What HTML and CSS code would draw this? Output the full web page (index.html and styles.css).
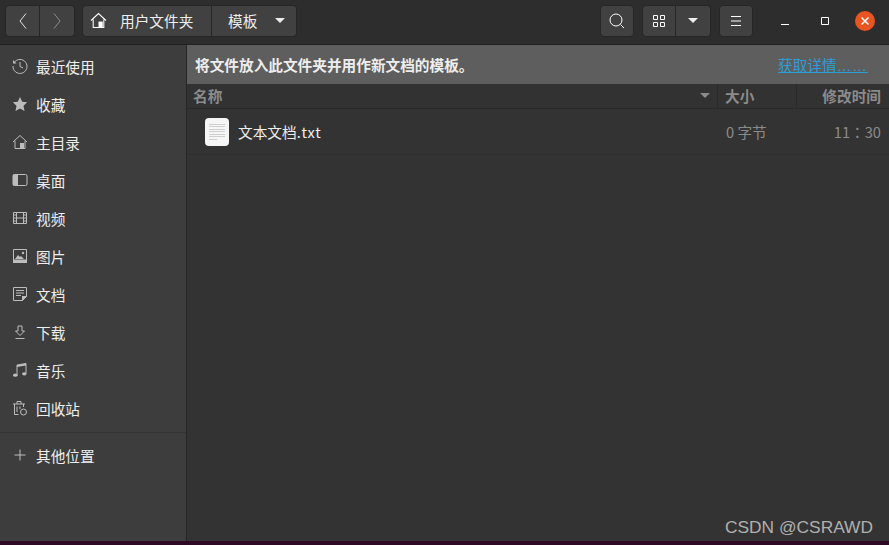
FILE: index.html
```html
<!DOCTYPE html>
<html lang="zh-CN">
<head>
<meta charset="utf-8">
<title>模板</title>
<link rel="stylesheet" href="styles.css">
</head>
<body>
<div class="window">
  <header class="titlebar">
    <div class="btn-group nav-group">
      <button class="btn nav-btn"><svg width="10" height="18" viewBox="0 0 10 18"><path d="M8 1.500 2 9l6 7.500" class="st"/></svg></button>
      <button class="btn nav-btn dim"><svg width="10" height="18" viewBox="0 0 10 18"><path d="M2 1.500 8 9l-6 7.500" class="st"/></svg></button>
    </div>
    <div class="btn-group path-group">
      <button class="btn path-home">
        <svg width="17" height="17" viewBox="0 0 16 16"><path d="M1 8 8 1.500 15 8M3 7v7.500h10V7" class="st"/><rect x="8" y="9" width="4" height="5.500" fill="#fff"/></svg>
        <span>用户文件夹</span>
      </button>
      <button class="btn path-current">
        <span>模板</span>
        <i class="caret"></i>
      </button>
    </div>
    <div class="spacer"></div>
    <button class="btn single"><svg width="18" height="18" viewBox="0 0 18 18"><circle cx="8" cy="8" r="6" class="st"/><path d="m12.500 12.500 3.500 3.500" class="st"/></svg></button>
    <div class="btn-group view-group">
      <button class="btn view-main"><svg width="14" height="14" viewBox="0 0 14 14"><path d="M1.500 1.500h4v4h-4zM8.500 1.500h4v4h-4zM1.500 8.500h4v4h-4zM8.500 8.500h4v4h-4z" class="st"/></svg></button>
      <button class="btn view-drop"><i class="caret"></i></button>
    </div>
    <button class="btn single"><svg width="14" height="14" viewBox="0 0 14 14"><path d="M2 2.500h10M2 7h10M2 11.500h10" class="st"/></svg></button>
    <div class="winctl">
      <span class="ctl"><svg width="10" height="10" viewBox="0 0 10 10"><path d="M1 8.500h8" class="st"/></svg></span>
      <span class="ctl"><svg width="10" height="10" viewBox="0 0 10 10"><path d="M1.500 1.500h7v7h-7z" class="st"/></svg></span>
      <span class="ctl close"><svg width="10" height="10" viewBox="0 0 10 10"><path d="m1.500 1.500 7 7m0-7-7 7" class="st thick"/></svg></span>
    </div>
  </header>
  <div class="main">
    <nav class="sidebar">
      <a class="item"><svg class="ico" viewBox="0 0 16 16"><path d="M2.200 4.500A7 7 0 1 1 1 8" class="si"/><path d="M1 2v3.500h3.500" fill="#bdbdbd"/><path d="M8 4v4.500l3 1.500" class="si"/></svg><span>最近使用</span></a>
      <a class="item"><svg class="ico" viewBox="0 0 16 16"><path d="m8 1 2.200 4.700 5 .6-3.700 3.500 1 5.100L8 12.400l-4.500 2.500 1-5.100L.8 6.300l5-.6z" fill="#bdbdbd"/></svg><span>收藏</span></a>
      <a class="item"><svg class="ico" viewBox="0 0 16 16"><path d="M1 8 8 1.500 15 8M3 7v7.500h10V7" class="si"/><rect x="8" y="9" width="4" height="5.500" fill="#bdbdbd"/></svg><span>主目录</span></a>
      <a class="item"><svg class="ico" viewBox="0 0 16 16"><rect x="1" y="2.500" width="14" height="11" rx="1.500" class="si"/><rect x="1" y="2.500" width="5" height="11" fill="#bdbdbd"/></svg><span>桌面</span></a>
      <a class="item"><svg class="ico" viewBox="0 0 16 16"><path d="M1.500 2.500h13v11h-13zM4.500 2.500v11M11.500 2.500v11M4.500 8h7M1.500 5h3M1.500 8h3M1.500 11h3M11.500 5h3M11.500 8h3M11.500 11h3" class="si"/></svg><span>视频</span></a>
      <a class="item"><svg class="ico" viewBox="0 0 16 16"><path d="M1.500 1.500h13v12.500h-13z" class="si"/><path d="M1 11.500h14V15H1zM3 11l3-4 2 2 1-1 3 3z" fill="#bdbdbd"/><circle cx="11" cy="5" r="1.200" fill="#bdbdbd"/></svg><span>图片</span></a>
      <a class="item"><svg class="ico" viewBox="0 0 16 16"><path d="M10.500 14.500h-9v-13h13v9zM4 4.500h8M4 7h8M4 9.500h5" class="si"/><path d="M10 15v-5h5z" fill="#bdbdbd"/></svg><span>文档</span></a>
      <a class="item"><svg class="ico" viewBox="0 0 16 16"><path d="M6 2h4v5h2.500L8 11.500 3.500 7H6zM3.500 14.500h9" class="si"/></svg><span>下载</span></a>
      <a class="item"><svg class="ico" viewBox="0 0 16 16"><path d="M5 13V3l9-1.500V11" class="si" stroke-width="1.400"/><ellipse cx="3.300" cy="13.200" rx="2.300" ry="1.600" fill="#bdbdbd"/><ellipse cx="12.300" cy="11.800" rx="2.300" ry="1.600" fill="#bdbdbd"/><path d="M5 3l9-1.500v2L5 5z" fill="#bdbdbd"/></svg><span>音乐</span></a>
      <a class="item"><svg class="ico" viewBox="0 0 16 16"><path d="M1 4h12M5 4V1.500h4V4M2.500 4v10.500h4M11.500 4v3M5 6.500V12M8 6.500V9" class="si"/><circle cx="11.500" cy="12" r="3" class="si"/></svg><span>回收站</span></a>
      <div class="sep"></div>
      <a class="item other"><svg class="ico" viewBox="0 0 16 16"><path d="M8 2.500v11M2.500 8h11" class="si"/></svg><span>其他位置</span></a>
    </nav>
    <section class="content">
      <div class="infobar">
        <strong>将文件放入此文件夹并用作新文档的模板。</strong>
        <a class="link">获取详情<span class="dots">……</span></a>
      </div>
      <div class="cols">
        <div class="col c-name"><span>名称</span><i class="caret sort"></i></div>
        <div class="col c-size">大小</div>
        <div class="col c-time">修改时间</div>
      </div>
      <div class="file">
        <div class="f-name">
          <div class="doc"><i></i><i></i><i></i><i></i><i></i><i></i><i class="short"></i></div>
          <span>文本文档<span class="ext">.txt</span></span>
        </div>
        <div class="f-size">0 字节</div>
        <div class="f-time">11：30</div>
      </div>
      <div class="mark">CSDN @CSRAWD</div>
    </section>
  </div>
</div>
<div class="strip"></div>
</body>
</html>
```
FILE: styles.css
```css
* { box-sizing: border-box; }
html, body { margin: 0; height: 545px; overflow: hidden; background: #300a24; }
body { font-family: "Noto Sans CJK SC", "Noto Sans", sans-serif; font-size: 14.67px; color: #eee; }
.window { height: 541px; display: flex; flex-direction: column; }
.strip { height: 4px; background: #300a24; }
.st { fill: none; stroke: #fff; stroke-width: 1; }
.st.thick { stroke-width: 1.5; }
.si { fill: none; stroke: #bdbdbd; stroke-width: 1; }

.titlebar { height: 45px; flex: none; display: flex; align-items: flex-start; gap: 8px; padding: 5px 0 0 5px; background: #2d2d2d; border-bottom: 1px solid #202020; }
.btn { font: inherit; color: #eee; height: 32px; display: flex; align-items: center; justify-content: center; padding: 0 0 1px; background: #414141; border: 1px solid #262626; border-radius: 4px; }
.btn-group { display: flex; }
.btn-group .btn { border-radius: 0; }
.btn-group .btn:first-child { border-radius: 4px 0 0 4px; }
.btn-group .btn:last-child { border-radius: 0 4px 4px 0; border-left: 0; }
.nav-btn { width: 35px; }
.nav-btn svg { opacity: .85; }
.nav-btn.dim svg { opacity: .4; }
.path-group { margin-left: -1px; }
.path-home { width: 130px; gap: 13px; justify-content: flex-start; padding-left: 7px; }
.path-current { width: 85px; justify-content: flex-start; padding-left: 16px; gap: 18px; }
.caret { display: block; width: 0; height: 0; border: 5px solid transparent; border-top: 5px solid #eee; border-bottom: 0; }
.spacer { flex: 1; }
.single { width: 34px; }
.view-main { width: 34px; }
.view-drop { width: 35px; }
.winctl { display: flex; align-items: center; height: 32px; gap: 20px; margin: 0 14px 0 14px; }
.ctl { width: 20px; height: 20px; display: flex; align-items: center; justify-content: center; }
.close { background: #e95420; border-radius: 50%; }

.main { flex: 1; display: flex; min-height: 0; }
.sidebar { width: 187px; flex: none; background: #3d3d3d; border-right: 1px solid #262626; padding-top: 2px; }
.item { height: 38px; display: flex; align-items: center; gap: 8px; padding-left: 12px; color: #eee; }
.ico { width: 16px; height: 16px; flex: none; }
.sep { height: 1px; background: #333; margin-top: 5px; }
.other { margin-top: 2px; height: 40px; padding-bottom: 0; }

.content { flex: 1; position: relative; background: #333; min-width: 0; }
.infobar { height: 39px; display: flex; align-items: center; justify-content: space-between; padding: 0 21px 0 8px; background: #5e5e5e; color: #eee; }
.infobar strong { font-weight: 700; }
.link { color: #2a9fd6; text-decoration: underline; }
.dots { font-family: "Liberation Sans", sans-serif; letter-spacing: 1px; }
.cols { height: 25px; display: flex; align-items: center; color: #8b8b8b; font-weight: 700; border-bottom: 1px solid #2a2a2a; background: #323232; }
.col { height: 100%; display: flex; align-items: center; padding-bottom: 2px; }
.c-name { width: 530px; justify-content: space-between; padding: 0 7px 2px 6px; }
.caret.sort { border-top-color: #8b8b8b; }
.c-size { width: 79px; padding-left: 7px; border-left: 1px solid #2a2a2a; }
.c-time { flex: 1; justify-content: flex-end; padding-right: 8px; border-left: 1px solid #2a2a2a; }
.file { height: 46px; display: flex; align-items: center; border-bottom: 1px solid #2e2e2e; }
.f-name { width: 530px; display: flex; align-items: center; gap: 9px; padding-left: 18px; color: #eee; }
.ext { letter-spacing: .8px; }
.doc { width: 24px; height: 28px; background: #f6f6f6; border-radius: 4px; padding: 6px 4px; display: flex; flex-direction: column; gap: 2px; }
.doc i { display: block; height: 1px; background: #cfcfcf; }
.doc i.short { width: 8px; }
.f-size { width: 79px; padding-left: 9px; color: #8b8b8b; }
.f-time { flex: 1; text-align: right; padding-right: 8px; color: #8b8b8b; font-family: "Noto Sans CJK TC", sans-serif; }
.mark { position: absolute; right: 16px; bottom: 3px; font-family: "Liberation Sans", sans-serif; font-size: 17.35px; color: #b0b0b0; }
```
